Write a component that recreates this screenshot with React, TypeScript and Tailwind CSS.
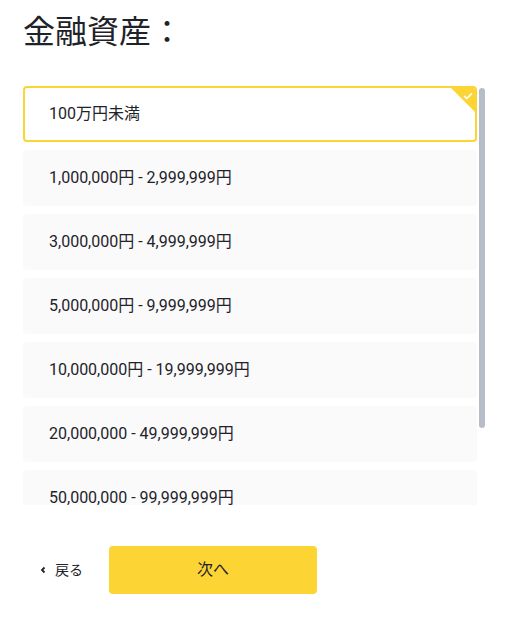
import React, { useState } from 'react';

const options = [
  '100万円未満',
  '1,000,000円 - 2,999,999円',
  '3,000,000円 - 4,999,999円',
  '5,000,000円 - 9,999,999円',
  '10,000,000円 - 19,999,999円',
  '20,000,000 - 49,999,999円',
  '50,000,000 - 99,999,999円',
  '100,000,000円以上',
];

function App() {
  const [selected, setSelected] = useState(0);

  return (
    <div
      className="w-[510px] h-[624px] bg-white px-[23px] pt-[11px] text-[#1e2329]"
      style={{ fontFamily: 'Roboto, "Noto Sans CJK JP", sans-serif' }}
    >
      <h1 className="text-[32px] leading-[42px] font-normal">金融資産：</h1>

      <div className="mt-[33px] flex">
        <div className="w-[454px] h-[419px] overflow-hidden flex flex-col gap-2">
          {options.map((label, i) => {
            const active = i === selected;
            return (
              <button
                key={label}
                onClick={() => setSelected(i)}
                className={
                  active
                    ? 'relative shrink-0 h-[56px] rounded-[4px] border-2 border-[#fcd535] bg-white pl-[24px] flex items-center text-left text-[16px] overflow-hidden'
                    : 'relative shrink-0 h-[56px] rounded-[4px] bg-[#fafafa] pl-[26px] flex items-center text-left text-[16px]'
                }
              >
                {label}
                {active && (
                  <span className="absolute top-0 right-0 w-[24px] h-[24px] bg-[#fcd535] [clip-path:polygon(0_0,100%_0,100%_100%)]">
                    <svg
                      viewBox="0 0 12 12"
                      className="absolute top-[3px] right-[2px] w-[10px] h-[10px]"
                      fill="none"
                      stroke="white"
                      strokeWidth="2"
                      strokeLinecap="round"
                      strokeLinejoin="round"
                    >
                      <path d="M2 6.5l2.5 2.5L10 3.5" />
                    </svg>
                  </span>
                )}
              </button>
            );
          })}
        </div>
        <div className="ml-[2px] mt-[2px] w-[6px] h-[340px] rounded-full bg-[#b7bdc6]" />
      </div>

      <div className="mt-[41px] flex items-center">
        <button className="ml-[16px] flex items-center gap-[8px] text-[14px]">
          <svg viewBox="0 0 8 8" className="w-[8px] h-[8px]" fill="none" stroke="#1e2329" strokeWidth="1.8">
            <path d="M5.5 1.5L3 4l2.5 2.5" />
          </svg>
          戻る
        </button>
        <button className="ml-[26px] w-[208px] h-[48px] rounded-[4px] bg-[#fcd535] text-[16px]">
          次へ
        </button>
      </div>
    </div>
  );
}

export default App;
